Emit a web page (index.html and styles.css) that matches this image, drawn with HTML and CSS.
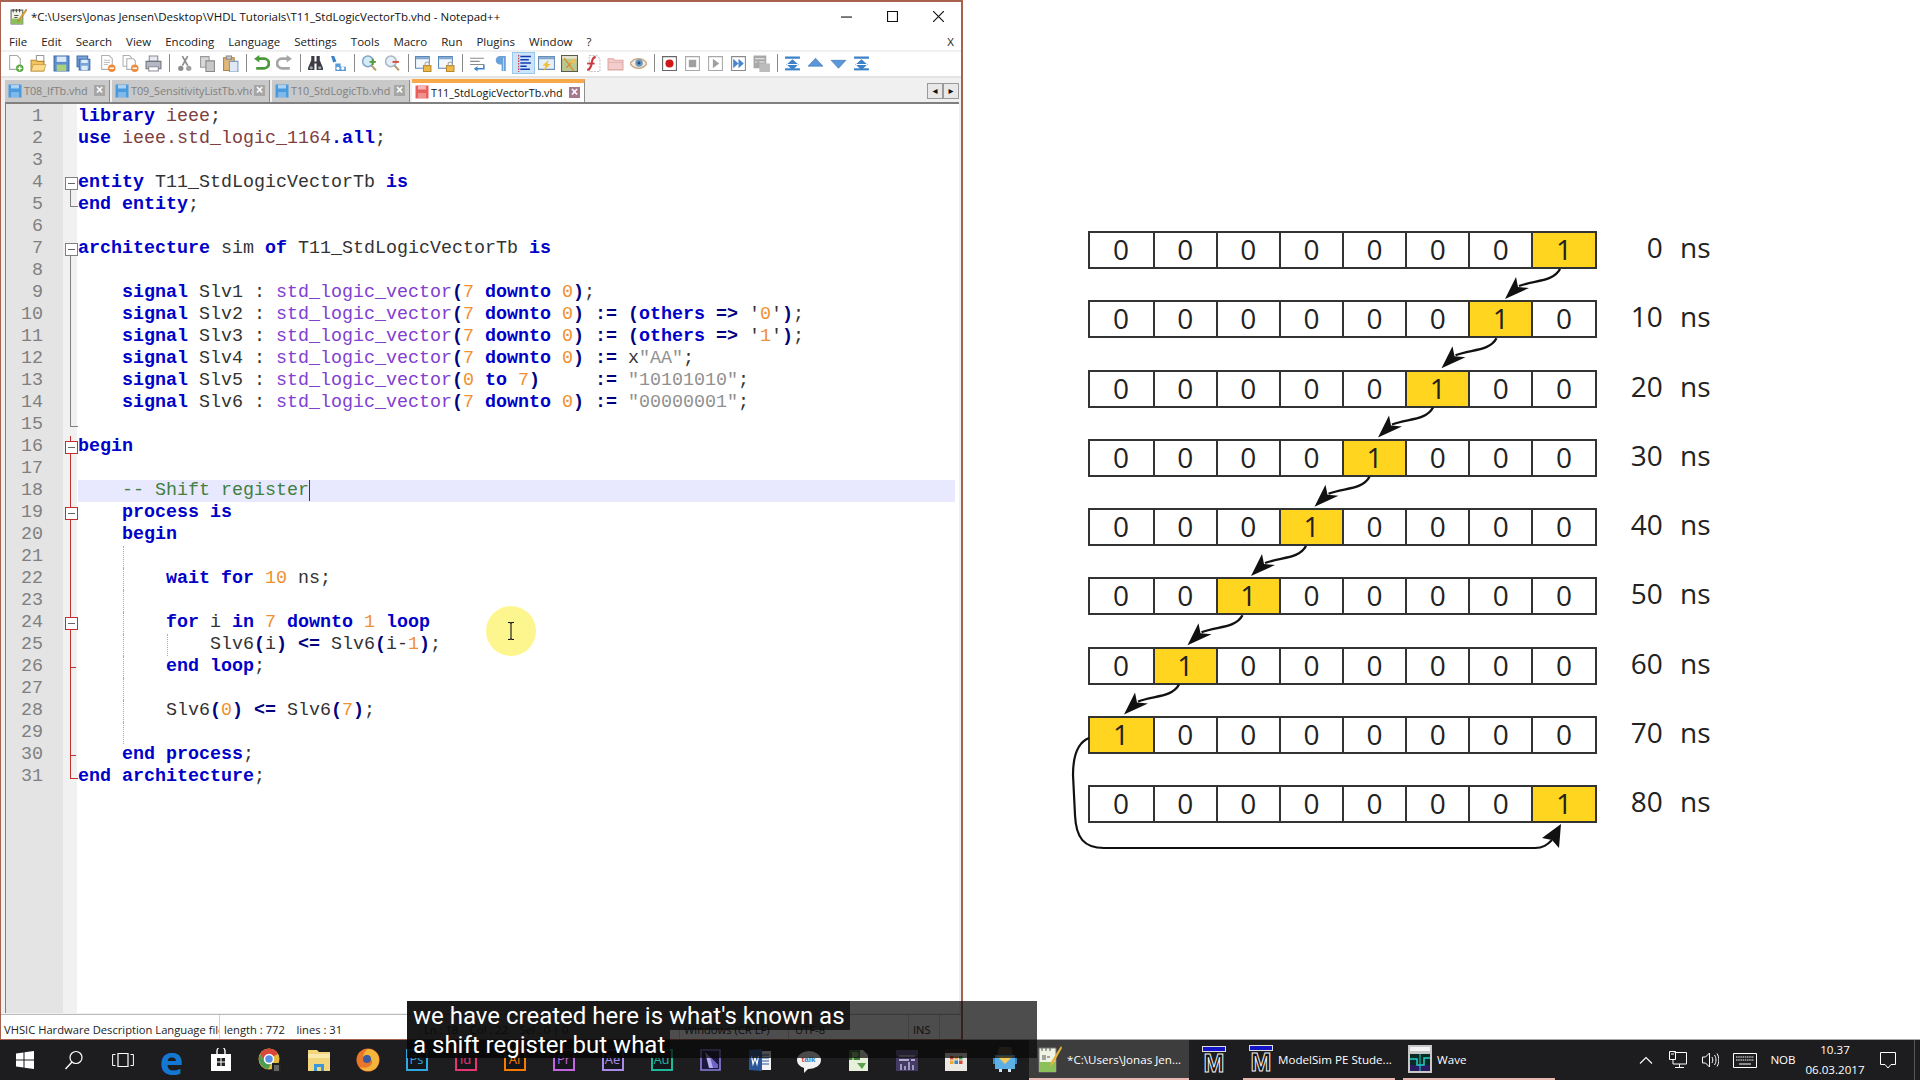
FILE: index.html

```html
<!DOCTYPE html>
<html lang="en">
<head>
  <meta charset="UTF-8" />
  <title>T11_StdLogicVectorTb.vhd - Notepad++</title>
  <link rel="stylesheet" href="styles.css">
</head>
<body>
  <!-- toolbar icon set -->
  <svg class="defs" xmlns="http://www.w3.org/2000/svg">
    <symbol id="i-new" viewBox="0 0 16 16"><path d="M2.5 .5h7l3 3v10h-10z" fill="#fff" stroke="#a8a8a8"/><circle cx="12" cy="12.5" r="3.5" fill="#5aa845"/><path d="M10 12.5h4M12 10.5v4" stroke="#fff" stroke-width="1.2"/></symbol>
    <symbol id="i-open" viewBox="0 0 16 16"><path d="M6 .5h7v8H6z" fill="#fff" stroke="#9a9a9a"/><path d="M1 5h5l1 1h6v9H1z" fill="#f2c35c" stroke="#b98a2e"/><path d="M1 15l2-6h12l-2 6z" fill="#fbdc8c" stroke="#b98a2e" stroke-width=".6"/></symbol>
    <symbol id="i-save" viewBox="0 0 16 16"><path d="M1 1h14v14H1z" fill="#5d8fd0" stroke="#3d6aa8"/><path d="M3.5 1.5h9v5h-9z" fill="#dbe8f6"/><path d="M3.5 9h9v6h-9z" fill="#a9d07e"/></symbol>
    <symbol id="i-saveall" viewBox="0 0 16 16"><path d="M1 1h10v10H1z" fill="#7ba4d8" stroke="#3d6aa8"/><path d="M3 4h10v10H3z" fill="#7ba4d8" stroke="#3d6aa8"/><path d="M5 4.5h6v3H5zM5 10h6v4H5z" fill="#dcebf8"/></symbol>
    <symbol id="i-close" viewBox="0 0 16 16"><path d="M2.5 .5h7l3 3v10h-10z" fill="#fff" stroke="#b0b0b0"/><path d="M4.5 5h6M4.5 7h6M4.5 9h4" stroke="#c0c0c0"/><circle cx="12" cy="12.5" r="3.5" fill="#ef8a3c"/><path d="M10 12.5h4" stroke="#fff" stroke-width="1.4"/></symbol>
    <symbol id="i-closeall" viewBox="0 0 16 16"><path d="M1 .5h6l2 2v8H1z" fill="#fff" stroke="#b0b0b0"/><path d="M4.5 3.500h6l2 2v8h-8z" fill="#fff" stroke="#b0b0b0"/><circle cx="12" cy="12.5" r="3.5" fill="#ef8a3c"/><path d="M10 12.5h4" stroke="#fff" stroke-width="1.4"/></symbol>
    <symbol id="i-print" viewBox="0 0 16 16"><path d="M4 1h8v5H4z" fill="#e8e8f0" stroke="#8a8a96"/><path d="M1 6h14v7H1z" fill="#b4b8c4" stroke="#70747e"/><path d="M3.500 11h9v4h-9z" fill="#fff" stroke="#8a8a96"/></symbol>
    <symbol id="i-cut" viewBox="0 0 16 16"><path d="M11 1L6 10M6 1l5 9" stroke="#8c8c8c" stroke-width="1.6"/><circle cx="4.500" cy="12.500" r="2.500" fill="#8c8c8c"/><circle cx="12" cy="12.500" r="2.500" fill="#a0a0a0"/></symbol>
    <symbol id="i-copy" viewBox="0 0 16 16"><path d="M1.500 1.500h8v10h-8z" fill="#d8d8d8" stroke="#9a9a9a"/><path d="M6.500 5.500h8v10h-8z" fill="#c8c8c8" stroke="#8a8a8a"/></symbol>
    <symbol id="i-paste" viewBox="0 0 16 16"><path d="M1.500 2.500h10v12h-10z" fill="#e2b878" stroke="#a98348"/><path d="M4 1h5v3H4z" fill="#c8c8c8" stroke="#888"/><path d="M7 6h8v10H7z" fill="#dfe9f6" stroke="#7c9cc4"/></symbol>
    <symbol id="i-undo" viewBox="0 0 16 16"><path d="M4 3.500h6.500a4.500 4.500 0 0 1 0 9H3" fill="none" stroke="#4d9a3a" stroke-width="2.600"/><path d="M6 0v7L1 3.500z" fill="#4d9a3a"/></symbol>
    <symbol id="i-redo" viewBox="0 0 16 16"><path d="M12 3.500H5.500a4.500 4.500 0 0 0 0 9H13" fill="none" stroke="#a6a6a6" stroke-width="2.600"/><path d="M10 0v7l5-3.500z" fill="#a6a6a6"/></symbol>
    <symbol id="i-find" viewBox="0 0 16 16"><path d="M4 1h3v5h2V1h3v4l3 7v2H9V8H7v6H1v-2l3-7z" fill="#3c3c46"/><circle cx="4" cy="12" r="1.500" fill="#9aa"/><circle cx="12" cy="12" r="1.500" fill="#9aa"/></symbol>
    <symbol id="i-replace" viewBox="0 0 16 16"><path d="M1 1h3l2 5-3 1z" fill="#3c82c8"/><path d="M5 8h5v3h5v4H5z" fill="#5b9ad8"/><circle cx="7.500" cy="12.500" r="1.500" fill="#fff"/><circle cx="12" cy="12.500" r="1.500" fill="#fff"/></symbol>
    <symbol id="i-zoomin" viewBox="0 0 16 16"><circle cx="6.500" cy="6" r="5" fill="#d6ebf8" stroke="#7fa6c8" stroke-width="1.400"/><path d="M10 10l4 4.500" stroke="#b89a70" stroke-width="2"/><path d="M8 6.500h6M11 3.500v6" stroke="#4d9a3a" stroke-width="1.800"/></symbol>
    <symbol id="i-zoomout" viewBox="0 0 16 16"><circle cx="6.500" cy="6" r="5" fill="#e6eef6" stroke="#a8b8c8" stroke-width="1.400"/><path d="M10 10l4 4.500" stroke="#b89a70" stroke-width="2"/><path d="M8 6.500h6" stroke="#d84a3c" stroke-width="1.800"/></symbol>
    <symbol id="i-sync" viewBox="0 0 16 16"><path d="M.5 1.500h13v11H.5z" fill="#f4f8fc" stroke="#5a88b8"/><path d="M1 2h12v2H1z" fill="#7ea6d0"/><path d="M8 10h7v5.500H8z" fill="#f0b848" stroke="#b88a2c"/><path d="M9.500 10V8.500a2 2 0 0 1 4 0V10" fill="none" stroke="#a8a8a8"/></symbol>
    <symbol id="i-wrap" viewBox="0 0 16 16"><path d="M1 3h13M1 6h9M1 9h13" stroke="#8a8a8a"/><path d="M14 9v4H7" fill="none" stroke="#3c82c8" stroke-width="1.400"/><path d="M8 10.500v5L4.500 13z" fill="#3c82c8"/></symbol>
    <symbol id="i-para" viewBox="0 0 16 16"><path d="M13 1H7.500a4 4 0 0 0 0 8H9v6h1.500V2.500H11V15h2z" fill="#6aa2da"/></symbol>
    <symbol id="i-indent" viewBox="0 0 16 16"><path d="M3.500 0v16" stroke="#c8202c" stroke-dasharray="1.500 1"/><path d="M5 1.500h10M5 4.500h8M5 7.500h10M5 10.500h6M5 13.500h9" stroke="#1438b4" stroke-width="1.400"/></symbol>
    <symbol id="i-lang" viewBox="0 0 16 16"><path d="M.5 1.500h15v12H.5z" fill="#e6f0fa" stroke="#6a8eb4"/><path d="M1 2h14v2H1z" fill="#7ea6d0"/><path d="M10 4.500L4 10h3l-2 5 7-6.500H9z" fill="#f2c040"/></symbol>
    <symbol id="i-map" viewBox="0 0 16 16"><path d="M.5.500h15v15H.5z" fill="#b8c890" stroke="#5c5c48"/><path d="M1 1h14v2.500H1z" fill="#e4e4d0"/><path d="M3 3l9 12M13 4L5 12" stroke="#d88c30" stroke-width="1.300"/><path d="M9 4h5v4H9z" fill="#e8c060"/></symbol>
    <symbol id="i-func" viewBox="0 0 16 16"><path d="M5 .500h7l3 3v12H5z" fill="#fff" stroke="#c4c4c4" stroke-dasharray="2 1"/><path d="M11 2C7 2 8 6 7 9s-1 5-4 5" fill="none" stroke="#c8383c" stroke-width="2"/><path d="M3 8h7" stroke="#c8383c" stroke-width="1.600"/></symbol>
    <symbol id="i-folder" viewBox="0 0 16 16"><path d="M1 3.500h5l1 1.500h8v9H1z" fill="#f3cdcb" stroke="#dca6a2"/><path d="M1 7h14" stroke="#e2b4b0"/></symbol>
    <symbol id="i-eye" viewBox="0 0 16 16"><path d="M0 8c4-6 12-6 16 0-4 6-12 6-16 0z" fill="#f4ece0" stroke="#c8aa84" stroke-width="1.400"/><circle cx="8.500" cy="7.500" r="3.500" fill="#6a96c4"/><circle cx="8.500" cy="7.500" r="1.400" fill="#2c4c70"/></symbol>
    <symbol id="i-rec" viewBox="0 0 16 16"><path d="M1.500 1.500h13v13h-13z" fill="#fff" stroke="#666"/><circle cx="8" cy="8" r="3.800" fill="#d01818"/></symbol>
    <symbol id="i-stop" viewBox="0 0 16 16"><path d="M1.500 1.500h13v13h-13z" fill="#fff" stroke="#a8a8a8"/><path d="M4.500 4.500h7v7h-7z" fill="#a0a0a0"/></symbol>
    <symbol id="i-play" viewBox="0 0 16 16"><path d="M1.500 1.500h13v13h-13z" fill="#fff" stroke="#a8a8a8"/><path d="M5.500 3.500l6 4.500-6 4.500z" fill="#a0a0a0"/></symbol>
    <symbol id="i-multi" viewBox="0 0 16 16"><path d="M1.500 1.500h13v13h-13z" fill="#fff" stroke="#8a8a8a"/><path d="M3 3.500l5 4.500-5 4.500zM8 3.500l5 4.500-5 4.500z" fill="#4a86d0"/></symbol>
    <symbol id="i-macro" viewBox="0 0 16 16"><path d="M.500 .500h12v12H.500z" fill="#a8a8a8"/><path d="M2 3h9v1H2zM2 6h2v1H2zM6 6h5v1H6z" fill="#eee"/><path d="M6 8h10v8H6z" fill="#bcbcbc"/></symbol>
    <symbol id="i-top" viewBox="0 0 16 16"><path d="M1 1.500h14v2H1zM8 4l6 5.500H2zM8 14l6-5.500H2z" fill="#3c82c8"/><path d="M1 12.500h14v2H1z" fill="#3c82c8"/></symbol>
    <symbol id="i-up" viewBox="0 0 16 16"><path d="M8 3l7 7.500H1z" fill="#5a96d8" stroke="#3c74b8" stroke-width=".6"/></symbol>
    <symbol id="i-down" viewBox="0 0 16 16"><path d="M8 12.500L1 5h14z" fill="#5a96d8" stroke="#3c74b8" stroke-width=".6"/></symbol>
    <symbol id="i-floppy" viewBox="0 0 14 14"><path d="M.500 .500h13v13H.500z" fill="currentColor"/><path d="M3 1h8v3.500H3z" fill="#fff" fill-opacity=".55"/><path d="M3 8h8v5.500H3z" fill="#fff" fill-opacity=".3"/></symbol>
  </svg>

  <div class="desktop">
    <section class="npp">
      <header class="titlebar">
        <svg class="app-icon" viewBox="0 0 16 16"><path d="M1 2h11v13H1z" fill="#eef3e4" stroke="#666"/><path d="M1 10h11v5H1z" fill="#8cc05a"/><path d="M3 1v3M6 1v3M9 1v3" stroke="#444"/><path d="M4 7h4M4 9h3" stroke="#555"/><path d="M15 1L8 11l-1 2 2-1L16 2z" fill="#e8b03c" stroke="#9c6c1c" stroke-width=".5"/></svg>
        <span class="title-text">*C:\Users\Jonas Jensen\Desktop\VHDL Tutorials\T11_StdLogicVectorTb.vhd - Notepad++</span>
        <div class="win-btns">
          <span class="win-btn"><svg viewBox="0 0 10 10"><path d="M0 5.500h10" stroke="#111"/></svg></span>
          <span class="win-btn"><svg viewBox="0 0 10 10"><path d="M.5.500h9v9h-9z" fill="none" stroke="#111"/></svg></span>
          <span class="win-btn"><svg viewBox="0 0 10 10"><path d="M0 0l10 10M10 0L0 10" stroke="#111" stroke-width="1.050"/></svg></span>
        </div>
      </header>

      <nav class="menubar">
        <span>File</span><span>Edit</span><span>Search</span><span>View</span><span>Encoding</span><span>Language</span><span>Settings</span><span>Tools</span><span>Macro</span><span>Run</span><span>Plugins</span><span>Window</span><span>?</span>
        <span class="menu-x">X</span>
      </nav>

      <div class="toolbar">
        <span class="tool"><svg><use href="#i-new"/></svg></span>
        <span class="tool"><svg><use href="#i-open"/></svg></span>
        <span class="tool"><svg><use href="#i-save"/></svg></span>
        <span class="tool"><svg><use href="#i-saveall"/></svg></span>
        <span class="tool"><svg><use href="#i-close"/></svg></span>
        <span class="tool"><svg><use href="#i-closeall"/></svg></span>
        <span class="tool"><svg><use href="#i-print"/></svg></span>
        <i class="sep"></i>
        <span class="tool"><svg><use href="#i-cut"/></svg></span>
        <span class="tool"><svg><use href="#i-copy"/></svg></span>
        <span class="tool"><svg><use href="#i-paste"/></svg></span>
        <i class="sep"></i>
        <span class="tool"><svg><use href="#i-undo"/></svg></span>
        <span class="tool"><svg><use href="#i-redo"/></svg></span>
        <i class="sep"></i>
        <span class="tool"><svg><use href="#i-find"/></svg></span>
        <span class="tool"><svg><use href="#i-replace"/></svg></span>
        <i class="sep"></i>
        <span class="tool"><svg><use href="#i-zoomin"/></svg></span>
        <span class="tool"><svg><use href="#i-zoomout"/></svg></span>
        <i class="sep"></i>
        <span class="tool"><svg><use href="#i-sync"/></svg></span>
        <span class="tool"><svg><use href="#i-sync"/></svg></span>
        <i class="sep"></i>
        <span class="tool"><svg><use href="#i-wrap"/></svg></span>
        <span class="tool"><svg><use href="#i-para"/></svg></span>
        <span class="tool active"><svg><use href="#i-indent"/></svg></span>
        <span class="tool"><svg><use href="#i-lang"/></svg></span>
        <span class="tool"><svg><use href="#i-map"/></svg></span>
        <span class="tool"><svg><use href="#i-func"/></svg></span>
        <span class="tool"><svg><use href="#i-folder"/></svg></span>
        <span class="tool"><svg><use href="#i-eye"/></svg></span>
        <i class="sep"></i>
        <span class="tool"><svg><use href="#i-rec"/></svg></span>
        <span class="tool"><svg><use href="#i-stop"/></svg></span>
        <span class="tool"><svg><use href="#i-play"/></svg></span>
        <span class="tool"><svg><use href="#i-multi"/></svg></span>
        <span class="tool"><svg><use href="#i-macro"/></svg></span>
        <i class="sep"></i>
        <span class="tool"><svg><use href="#i-top"/></svg></span>
        <span class="tool"><svg><use href="#i-up"/></svg></span>
        <span class="tool"><svg><use href="#i-down"/></svg></span>
        <span class="tool"><svg><use href="#i-top"/></svg></span>
      </div>

      <div class="tabbar">
        <div class="tab tab-a"><svg class="floppy"><use href="#i-floppy"/></svg><span class="tab-name">T08_IfTb.vhd</span><b class="tab-x">&times;</b></div>
        <div class="tab tab-b"><svg class="floppy"><use href="#i-floppy"/></svg><span class="tab-name">T09_SensitivityListTb.vhd</span><b class="tab-x">&times;</b></div>
        <div class="tab tab-c"><svg class="floppy"><use href="#i-floppy"/></svg><span class="tab-name">T10_StdLogicTb.vhd</span><b class="tab-x">&times;</b></div>
        <div class="tab tab-d current"><svg class="floppy"><use href="#i-floppy"/></svg><span class="tab-name">T11_StdLogicVectorTb.vhd</span><b class="tab-x">&times;</b></div>
        <div class="tab-scroll"><span>&#9666;</span><span>&#9656;</span></div>
      </div>

      <div class="editor">
        <div class="row"><span class="num">1</span><span class="fold"></span><code><b class="k">library</b> <span class="l">ieee</span>;</code></div>
        <div class="row"><span class="num">2</span><span class="fold"></span><code><b class="k">use</b> <span class="l">ieee.std_logic_1164</span><b class="k">.all</b>;</code></div>
        <div class="row"><span class="num">3</span><span class="fold"></span><code></code></div>
        <div class="row"><span class="num">4</span><span class="fold box"></span><code><b class="k">entity</b> T11_StdLogicVectorTb <b class="k">is</b></code></div>
        <div class="row"><span class="num">5</span><span class="fold end"></span><code><b class="k">end entity</b>;</code></div>
        <div class="row"><span class="num">6</span><span class="fold"></span><code></code></div>
        <div class="row"><span class="num">7</span><span class="fold box"></span><code><b class="k">architecture</b> sim <b class="k">of</b> T11_StdLogicVectorTb <b class="k">is</b></code></div>
        <div class="row"><span class="num">8</span><span class="fold line"></span><code></code></div>
        <div class="row"><span class="num">9</span><span class="fold line"></span><code>    <b class="k">signal</b> Slv1 : <span class="t">std_logic_vector</span><b class="o">(</b><span class="n">7</span> <b class="k">downto</b> <span class="n">0</span><b class="o">)</b>;</code></div>
        <div class="row"><span class="num">10</span><span class="fold line"></span><code>    <b class="k">signal</b> Slv2 : <span class="t">std_logic_vector</span><b class="o">(</b><span class="n">7</span> <b class="k">downto</b> <span class="n">0</span><b class="o">)</b> <b class="o">:=</b> <b class="o">(</b><b class="k">others</b> <b class="o">=&gt;</b> '<span class="n">0</span>'<b class="o">)</b>;</code></div>
        <div class="row"><span class="num">11</span><span class="fold line"></span><code>    <b class="k">signal</b> Slv3 : <span class="t">std_logic_vector</span><b class="o">(</b><span class="n">7</span> <b class="k">downto</b> <span class="n">0</span><b class="o">)</b> <b class="o">:=</b> <b class="o">(</b><b class="k">others</b> <b class="o">=&gt;</b> '<span class="n">1</span>'<b class="o">)</b>;</code></div>
        <div class="row"><span class="num">12</span><span class="fold line"></span><code>    <b class="k">signal</b> Slv4 : <span class="t">std_logic_vector</span><b class="o">(</b><span class="n">7</span> <b class="k">downto</b> <span class="n">0</span><b class="o">)</b> <b class="o">:=</b> x<span class="s">"AA"</span>;</code></div>
        <div class="row"><span class="num">13</span><span class="fold line"></span><code>    <b class="k">signal</b> Slv5 : <span class="t">std_logic_vector</span><b class="o">(</b><span class="n">0</span> <b class="k">to</b> <span class="n">7</span><b class="o">)</b>     <b class="o">:=</b> <span class="s">"10101010"</span>;</code></div>
        <div class="row"><span class="num">14</span><span class="fold line"></span><code>    <b class="k">signal</b> Slv6 : <span class="t">std_logic_vector</span><b class="o">(</b><span class="n">7</span> <b class="k">downto</b> <span class="n">0</span><b class="o">)</b> <b class="o">:=</b> <span class="s">"00000001"</span>;</code></div>
        <div class="row"><span class="num">15</span><span class="fold end"></span><code></code></div>
        <div class="row"><span class="num">16</span><span class="fold box red"></span><code><b class="k">begin</b></code></div>
        <div class="row"><span class="num">17</span><span class="fold line red"></span><code></code></div>
        <div class="row"><span class="num">18</span><span class="fold line red"></span><code class="current-line">    <span class="c caret">-- Shift register</span></code></div>
        <div class="row"><span class="num">19</span><span class="fold box red"></span><code>    <b class="k">process is</b></code></div>
        <div class="row"><span class="num">20</span><span class="fold line red"></span><code>    <b class="k">begin</b></code></div>
        <div class="row"><span class="num">21</span><span class="fold line red"></span><code><i class="guide g1"></i></code></div>
        <div class="row"><span class="num">22</span><span class="fold line red"></span><code><i class="guide g1"></i>        <b class="k">wait for</b> <span class="n">10</span> ns;</code></div>
        <div class="row"><span class="num">23</span><span class="fold line red"></span><code><i class="guide g1"></i></code></div>
        <div class="row"><span class="num">24</span><span class="fold box red"></span><code><i class="guide g1"></i>        <b class="k">for</b> i <b class="k">in</b> <span class="n">7</span> <b class="k">downto</b> <span class="n">1</span> <b class="k">loop</b></code></div>
        <div class="row"><span class="num">25</span><span class="fold line red"></span><code><i class="guide g1"></i><i class="guide g2"></i>            Slv6<b class="o">(</b>i<b class="o">)</b> <b class="o">&lt;=</b> Slv6<b class="o">(</b>i-<span class="n">1</span><b class="o">)</b>;</code></div>
        <div class="row"><span class="num">26</span><span class="fold tick red"></span><code><i class="guide g1"></i>        <b class="k">end loop</b>;</code></div>
        <div class="row"><span class="num">27</span><span class="fold line red"></span><code><i class="guide g1"></i></code></div>
        <div class="row"><span class="num">28</span><span class="fold line red"></span><code><i class="guide g1"></i>        Slv6<b class="o">(</b><span class="n">0</span><b class="o">)</b> <b class="o">&lt;=</b> Slv6<b class="o">(</b><span class="n">7</span><b class="o">)</b>;</code></div>
        <div class="row"><span class="num">29</span><span class="fold line red"></span><code><i class="guide g1"></i></code></div>
        <div class="row"><span class="num">30</span><span class="fold tick red"></span><code>    <b class="k">end process</b>;</code></div>
        <div class="row"><span class="num">31</span><span class="fold end red"></span><code><b class="k">end architecture</b>;</code></div>
      </div>

      <footer class="statusbar">
        <span class="panel p1">VHSIC Hardware Description Language file</span>
        <span class="panel p2">length : 772&nbsp;&nbsp;&nbsp; lines : 31</span>
        <span class="panel p3">Ln : 18 &nbsp;&nbsp; Col : 22 &nbsp;&nbsp; Sel : 0 | 0</span>
        <span class="panel p4">Windows (CR LF)</span>
        <span class="panel p5">UTF-8</span>
        <span class="panel p6">INS</span>
      </footer>
    </section>

    <section class="stage">
      <div class="reg"><div class="board"><span>0</span><span>0</span><span>0</span><span>0</span><span>0</span><span>0</span><span>0</span><span class="on">1</span></div><span class="time">0 ns</span></div>
      <div class="reg"><div class="board"><span>0</span><span>0</span><span>0</span><span>0</span><span>0</span><span>0</span><span class="on">1</span><span>0</span></div><span class="time">10 ns</span></div>
      <div class="reg"><div class="board"><span>0</span><span>0</span><span>0</span><span>0</span><span>0</span><span class="on">1</span><span>0</span><span>0</span></div><span class="time">20 ns</span></div>
      <div class="reg"><div class="board"><span>0</span><span>0</span><span>0</span><span>0</span><span class="on">1</span><span>0</span><span>0</span><span>0</span></div><span class="time">30 ns</span></div>
      <div class="reg"><div class="board"><span>0</span><span>0</span><span>0</span><span class="on">1</span><span>0</span><span>0</span><span>0</span><span>0</span></div><span class="time">40 ns</span></div>
      <div class="reg"><div class="board"><span>0</span><span>0</span><span class="on">1</span><span>0</span><span>0</span><span>0</span><span>0</span><span>0</span></div><span class="time">50 ns</span></div>
      <div class="reg"><div class="board"><span>0</span><span class="on">1</span><span>0</span><span>0</span><span>0</span><span>0</span><span>0</span><span>0</span></div><span class="time">60 ns</span></div>
      <div class="reg"><div class="board"><span class="on">1</span><span>0</span><span>0</span><span>0</span><span>0</span><span>0</span><span>0</span><span>0</span></div><span class="time">70 ns</span></div>
      <div class="reg"><div class="board"><span>0</span><span>0</span><span>0</span><span>0</span><span>0</span><span>0</span><span>0</span><span class="on">1</span></div><span class="time">80 ns</span></div>

      <!-- arrows between the register rows -->
      <svg class="arrows" viewBox="963 0 957 1039">
        <g id="hop">
          <path d="M1560 269C1553 282 1535 280 1519 286" fill="none" stroke="#111" stroke-width="2.4"/>
          <path d="M1505 299L1516 277L1518 287L1529 288Z" fill="#111"/>
        </g>
        <use href="#hop" transform="translate(-63.5 69.25)"/>
        <use href="#hop" transform="translate(-127 138.5)"/>
        <use href="#hop" transform="translate(-190.5 207.75)"/>
        <use href="#hop" transform="translate(-254 277)"/>
        <use href="#hop" transform="translate(-317.5 346.25)"/>
        <use href="#hop" transform="translate(-381 415.5)"/>
        <path d="M1089 738C1079 742 1073 752 1073 775L1075 815C1076 838 1084 848 1104 848L1535 848C1543 848 1547 845 1552 840" fill="none" stroke="#111" stroke-width="2.2"/>
        <path d="M1561 824L1559 848L1552 840L1542 838Z" fill="#111"/>
      </svg>
    </section>
  </div>

  <footer class="taskbar">
    <div class="slot"><svg width="18" height="18" viewBox="0 0 18 18"><path d="M0 2.500l7.500-1v7H0zM8.500 1.300L18 0v8.500H8.500zM0 9.500h7.500v7L0 15.500zM8.500 9.500H18V18l-9.500-1.300z" fill="#fff"/></svg></div>
    <div class="slot"><svg width="20" height="20" viewBox="0 0 20 20"><circle cx="12" cy="7.500" r="6" fill="none" stroke="#fff" stroke-width="1.200"/><path d="M8 12l-6.500 7" stroke="#fff" stroke-width="1.400"/></svg></div>
    <div class="slot"><svg width="22" height="16" viewBox="0 0 22 16"><path d="M6 1.500h10v13H6z" fill="none" stroke="#fff" stroke-width="1.200"/><path d="M3.500 2.500H.6v11h2.900M18.500 2.500h2.900v11h-2.900" fill="none" stroke="#fff"/></svg></div>
    <div class="slot"><span class="edge-e">e</span></div>
    <div class="slot"><svg width="22" height="24" viewBox="0 0 22 24"><path d="M1 6h20v17H1z" fill="#fff"/><path d="M7 6V3a4 4 0 0 1 8 0v3" fill="none" stroke="#fff" stroke-width="1.400"/><path d="M7 10h3.500v3.500H7zM11.500 10H15v3.500h-3.500zM7 14.500h3.500V18H7zM11.500 14.500H15V18h-3.500z" fill="#222"/></svg></div>
    <div class="slot"><svg width="24" height="24" viewBox="0 0 24 24"><circle cx="11" cy="11" r="10.500" fill="#e4b93c"/><path d="M11 .5A10.500 10.500 0 0 0 2 6l5 8h4l-1-3 10-5A10.500 10.500 0 0 0 11 .5z" fill="#d9483b"/><path d="M2 6a10.500 10.500 0 0 0 8 15l4-7H7z" fill="#4a9d52"/><circle cx="11" cy="11" r="4.500" fill="#5b8fe6" stroke="#fff" stroke-width="1.500"/><path d="M14 15h9v9h-9z" fill="#222"/><path d="M16 17h5v6h-5z" fill="#666"/></svg></div>
    <div class="slot"><svg width="22" height="22" viewBox="0 0 22 22"><path d="M0 1h9l2 2h11v19H0z" fill="#f3d57c"/><path d="M0 5h22v4H0z" fill="#fbe9ab"/><path d="M6 15h10v7H6z" fill="#3a98d8"/><path d="M9 18h4v4H9z" fill="#f3d57c"/></svg></div>
    <div class="slot"><svg width="24" height="24" viewBox="0 0 24 24"><circle cx="12" cy="12" r="11.500" fill="#e8772c"/><path d="M12 1A11 11 0 0 1 23 12c0 7-5 11-11 11-3 0-6-1-8-4 5 2 11 0 12-4 1-3-2-5-4-5l1-2c-2-1-5 0-6 1 0-3 3-7 5-8z" fill="#f4b63a"/><circle cx="11" cy="11" r="4" fill="#3b5aa0"/></svg></div>
    <div class="slot"><span class="tile ps">Ps</span></div>
    <div class="slot"><span class="tile id">Id</span></div>
    <div class="slot"><span class="tile ai">Ai</span></div>
    <div class="slot"><span class="tile pr">Pr</span></div>
    <div class="slot"><span class="tile ae">Ae</span></div>
    <div class="slot"><span class="tile au">Au</span></div>
    <div class="slot"><svg width="21" height="22" viewBox="0 0 21 22"><path d="M1 1h19v20H1z" fill="#1b1740" stroke="#8a80dc" stroke-width="1.600"/><path d="M5 3l13 13v3H9z" fill="#b6b0ec"/><path d="M10 8l8 8v3h-5z" fill="#6c62c8"/></svg></div>
    <div class="slot"><svg width="22" height="22" viewBox="0 0 22 22"><path d="M9 2h13v19H9z" fill="#f4f4f4"/><path d="M12 6h8M12 9h8M12 12h8M12 15h8" stroke="#2b579a"/><path d="M0 1l13-1v22L0 21z" fill="#2b579a"/><path d="M2.500 7l1.500 8 2-6 2 6 1.500-8" fill="none" stroke="#fff" stroke-width="1.200"/></svg></div>
    <div class="slot"><span class="talk"><i>t</i><i>a</i><i>l</i><i>k</i></span></div>
    <div class="slot"><svg width="22" height="23" viewBox="0 0 22 23"><path d="M2 1h14l5 5v16H2z" fill="#e6f0da"/><path d="M2 1h11v10H2z" fill="#3e7a3a"/><path d="M5 3h4a2.500 2.500 0 0 1 0 5H7v3H5z" fill="#9cc37a"/><path d="M10 14l5 6 4-6z" fill="#5aa04a"/></svg></div>
    <div class="slot"><svg width="22" height="23" viewBox="0 0 22 23"><path d="M0 1h22v21H0z" fill="#443a66"/><path d="M0 1h22v6H0z" fill="#6a5c92"/><path d="M3 7h16M3 11h10M15 11h4" stroke="#d6d0e8" stroke-width="1.400"/><path d="M5 21v-6M9 21v-4M13 21v-8M17 21v-5" stroke="#c8c0e0" stroke-width="1.400"/></svg></div>
    <div class="slot"><svg width="22" height="22" viewBox="0 0 22 22"><path d="M0 0h22v22H0z" fill="#ece9e2"/><path d="M0 0h22v4H0z" fill="#3b2a26"/><path d="M5 7h3.500v3.500H5z" fill="#d84a3c"/><path d="M9.500 7H13v3.500H9.500z" fill="#f0a830"/><path d="M14 7h3.500v3.500H14z" fill="#4aa04a"/><path d="M5 11.500h3.500V15H5z" fill="#f0a830"/><path d="M9.500 11.500H13V15H9.500z" fill="#3c82c8"/><path d="M14 11.500h3.500V15H14z" fill="#d84a3c"/></svg></div>
    <div class="slot"><svg width="24" height="26" viewBox="0 0 24 26"><path d="M6 0h12l2 8H4z" fill="#5a4838"/><path d="M2 8h20v14H2z" fill="#5cb0e4"/><path d="M4 9h16l-8 8z" fill="#f4ca60"/><path d="M0 11h2v6H0zM22 11h2v6h-2z" fill="#3c88c0"/><path d="M6 22h3v3H6zM15 22h3v3h-3z" fill="#cfe4f4"/></svg></div>

    <div class="task on-screen current-task">
      <svg width="24" height="28" viewBox="0 0 24 28"><path d="M1 3h17v24H1z" fill="#eef3e4" stroke="#777"/><path d="M1 17h17v10H1z" fill="#8cc05a"/><path d="M4 2v4M8 2v4M12 2v4" stroke="#555"/><path d="M5 10v5M7 10v5M9 12h3" stroke="#555"/><path d="M23 1L13 17l-1 4 3-2L24 3z" fill="#e8b03c"/></svg>
      <span>*C:\Users\Jonas Jen...</span>
    </div>
    <div class="m-slot"><span class="msim"><i></i><b>M</b></span></div>
    <div class="task on-screen ms">
      <span class="msim"><i></i><b>M</b></span>
      <span>ModelSim PE Stude...</span>
    </div>
    <div class="task on-screen wave">
      <svg width="24" height="28" viewBox="0 0 24 28"><path d="M0 0h24v28H0z" fill="#c8c8c8"/><path d="M2 2h20v4H2z" fill="#f4f4f4"/><path d="M2 9h20v17H2z" fill="#0a2a24"/><path d="M2 20h20v6H2z" fill="#2a1a60"/><path d="M2 14h7v6h7v-7h6" fill="none" stroke="#1fd0c8" stroke-width="1.500"/><path d="M12 9v17" stroke="#1fd0c8"/></svg>
      <span>Wave</span>
    </div>

    <div class="tray">
      <span class="ti t1"><svg width="14" height="8" viewBox="0 0 14 8"><path d="M1 7.500L7 1.500l6 6" fill="none" stroke="#fff" stroke-width="1.100"/></svg></span>
      <span class="ti t2"><svg width="18" height="18" viewBox="0 0 18 18"><path d="M5.500 1.500H17.500V13H4V9" fill="none" stroke="#fff"/><path d="M.5 .5h6v8h-6z" fill="none" stroke="#fff"/><path d="M2 3h3" stroke="#fff"/><path d="M10.500 13v3M6 16.500h9" stroke="#fff"/></svg></span>
      <span class="ti t3"><svg width="17" height="16" viewBox="0 0 17 16"><path d="M.5 5h3L7.500 1v14L3.500 11h-3z" fill="none" stroke="#fff"/><path d="M10 5c1 2 1 4 0 6M12.500 3c2 3 2 7 0 10M15 1.500c2.500 4 2.500 9 0 13" fill="none" stroke="#fff"/></svg></span>
      <span class="ti t4"><svg width="24" height="15" viewBox="0 0 24 15"><path d="M.5.500h23v14H.5z" fill="none" stroke="#fff"/><path d="M3 4h18M3 7h18" stroke="#fff" stroke-dasharray="1.500 .7"/><path d="M6 11h12" stroke="#fff"/></svg></span>
      <span class="ti t5">NOB</span>
      <span class="ti t6">10.37<br>06.03.2017</span>
      <span class="ti t7"><svg width="16" height="17" viewBox="0 0 16 17"><path d="M.5 .5h15v12H11L8 16 5 12.500H.5z" fill="none" stroke="#fff"/></svg></span>
      <span class="ti t8"></span>
    </div>
  </footer>

  <div class="caption">
    <p><span>we have created here is what's known as</span></p>
    <p><span>a shift register but what</span></p>
  </div>

  <div class="pointer">
    <svg width="8" height="18" viewBox="0 0 8 18"><path d="M1 .5h2l1 1 1-1h2M4 1.500v15M1 17.500h2l1-1 1 1h2" fill="none" stroke="#111" stroke-width="1.100"/></svg>
  </div>
</body>
</html>
```

FILE: styles.css

```css
* {
  box-sizing: border-box;
}

html, body {
  margin: 0;
  width: 1920px;
  height: 1080px;
  overflow: hidden;
}

body {
  position: relative;
  font-family: "Open Sans", sans-serif;
  background: #fff;
  color: #222;
}

.defs {
  position: absolute;
  width: 0;
  height: 0;
}

.desktop {
  display: flex;
  height: 1040px;
}

/* Notepad++ window */
.npp {
  display: flex;
  flex-direction: column;
  width: 963px;
  height: 1040px;
  background: #f0f0f0;
  border: 1px solid #a8604f;
  border-width: 2px 2px 1px 1px;
}

.titlebar {
  display: flex;
  align-items: center;
  height: 30px;
  padding: 0 0 1px 9px;
  background: #fff;
}

.app-icon {
  width: 17px;
  height: 17px;
  margin-right: 4px;
}

.title-text {
  font-size: 11.5px;
  color: #111;
  white-space: nowrap;
}

.win-btns {
  display: flex;
  margin-left: auto;
}

.win-btn {
  display: flex;
  align-items: center;
  justify-content: center;
  width: 46px;
  height: 29px;
}

.win-btn svg {
  width: 11px;
  height: 11px;
}

.menubar {
  display: flex;
  align-items: center;
  height: 18px;
  padding-left: 1px;
  background: #fff;
  font-size: 11.5px;
  color: #222;
}

.menubar span {
  padding: 0 7px;
}

.menubar .menu-x {
  margin-left: auto;
  padding: 0 7px 0 0;
}

.toolbar {
  display: flex;
  align-items: flex-start;
  height: 28px;
  padding-left: 3px;
  background: #fff;
  border-top: 2px solid #f0f0f0;
  border-bottom: 2px solid #e4e4e4;
}

.tool {
  display: flex;
  align-items: center;
  justify-content: center;
  width: 23px;
  height: 22px;
}

.tool svg {
  width: 17px;
  height: 17px;
}

.tool.active {
  background: #cce4f7;
  border: 1px solid #98c8ee;
}

.sep {
  width: 8px;
  height: 18px;
  margin-top: 2px;
  background: linear-gradient(#8a8a8a, #8a8a8a) center / 1px 100% no-repeat;
}

.tabbar {
  display: flex;
  align-items: flex-end;
  gap: 2px;
  height: 24px;
  padding-left: 4px;
  background: #f0f0f0;
}

.tab {
  display: flex;
  align-items: center;
  gap: 2px;
  height: 22px;
  padding: 0 4px 1px 3px;
  background: #c9c9c9;
  border-right: 1px solid #8e8e8e;
  font-size: 10.8px;
  color: #808080;
}

.tab-a { width: 105px; }
.tab-b { width: 158px; }
.tab-c { width: 138px; }
.tab-d { width: 173px; }

.tab.current {
  height: 23px;
  background: #fff;
  border-top: 4px solid #f7a94a;
  color: #111;
}

.floppy {
  flex: none;
  width: 14px;
  height: 14px;
  color: #4a9ae0;
}

.current .floppy {
  color: #e8605c;
}

.tab-name {
  flex: 1;
  white-space: nowrap;
  overflow: hidden;
}

.tab-x {
  flex: none;
  width: 11px;
  height: 11px;
  background: #a6a6a6;
  color: #fff;
  font: bold 12px/10px "Liberation Sans", sans-serif;
  text-align: center;
}

.current .tab-x {
  background: #a5788f;
}

.tab-scroll {
  display: flex;
  margin: 0 2px 3px auto;
}

.tab-scroll span {
  width: 16px;
  height: 16px;
  border: 1px solid #9a9a9a;
  background: #e8e8e8;
  font: 10px/14px "DejaVu Sans", sans-serif;
  text-align: center;
  color: #111;
}

/* code area */
.editor {
  flex: 1;
  margin: 0 2px 1px 4px;
  padding-top: 2px;
  border-top: 2px solid #808080;
  border-left: 1px solid #808080;
  background: linear-gradient(90deg, #e4e4e4 0 57px, #f1f1f1 57px 71px, #fff 71px);
  font-family: "Liberation Mono", monospace;
  font-size: 18.33px;
}

.row {
  display: flex;
  height: 22px;
  line-height: 22px;
}

.num {
  flex: none;
  width: 57px;
  padding-right: 20px;
  text-align: right;
  color: #808080;
}

.fold {
  --fold: #808080;
  flex: none;
  position: relative;
  width: 14px;
  margin-right: 1px;
}

.fold.red {
  --fold: #c0302c;
}

.fold.line::before,
.fold.tick::before,
.fold.box::before {
  content: "";
  position: absolute;
  left: 7px;
  top: 0;
  bottom: 0;
  width: 1px;
  background: var(--fold);
}

.fold.box:not(.red)::before {
  top: 11px;
}

.fold.tick::after {
  content: "";
  position: absolute;
  left: 7px;
  top: 11px;
  width: 6px;
  height: 1px;
  background: var(--fold);
}

.fold.end::before {
  content: "";
  position: absolute;
  left: 7px;
  top: 0;
  width: 7px;
  height: 12px;
  border-left: 1px solid var(--fold);
  border-bottom: 1px solid var(--fold);
}

.fold.box::after {
  content: "";
  position: absolute;
  left: 2px;
  top: 5px;
  width: 11px;
  height: 11px;
  border: 1px solid var(--fold);
  background: linear-gradient(#666, #666) center / 7px 1px no-repeat, #fff;
}

code {
  flex: 1;
  position: relative;
  font: inherit;
  white-space: pre;
  color: #333;
}

.current-line {
  background: #e8e8ff;
  margin-right: 4px;
}

.k { color: #0000c8; }
.o { color: #000080; }
.l { color: #804040; }
.t { color: #8040d0; }
.n { color: #f09030; }
.s { color: #909090; }
.c { color: #408040; }

.caret {
  border-right: 1px solid #8000a0;
}

.guide {
  position: absolute;
  top: 0;
  bottom: 0;
  width: 1px;
  border-left: 1px dotted #aaa;
}

.g1 { left: 45px; }
.g2 { left: 89px; }

.statusbar {
  display: flex;
  height: 25px;
  background: #fff;
  border-top: 1px solid #bbb;
  font-size: 11.2px;
  line-height: 29px;
  color: #222;
}

.panel {
  flex: none;
  padding-left: 4px;
  border-right: 1px solid #d0d0d0;
  white-space: nowrap;
  overflow: hidden;
}

.p1 { width: 219px; padding-left: 3px; }
.p2 { width: 200px; }
.p3 { width: 260px; }
.p4 { width: 109px; }
.p5 { width: 120px; padding-left: 6px; }
.p6 { width: 31px; }

/* shift register diagram */
.stage {
  position: relative;
  display: flex;
  flex: 1;
  flex-direction: column;
  gap: 31.25px;
  padding: 231px 0 0 124.5px;
  border-bottom: 1px solid #aaa;
}

.reg {
  display: flex;
  height: 38px;
}

.board {
  display: grid;
  grid-template-columns: repeat(8, 1fr);
  width: 509px;
  border: 2px solid #333;
}

.board span {
  border-left: 2px solid #333;
  font-size: 28px;
  line-height: 33px;
  text-align: center;
  color: #222;
}

.board span:first-child {
  border-left: 0;
}

.board .on {
  background: #ffd520;
}

.time {
  width: 114px;
  font-size: 28px;
  line-height: 33px;
  text-align: right;
  word-spacing: 10px;
  color: #222;
}

.arrows {
  position: absolute;
  left: 0;
  top: 0;
  width: 957px;
  height: 1039px;
  pointer-events: none;
}

/* windows taskbar */
.taskbar {
  display: flex;
  align-items: center;
  height: 40px;
  background: #1d1d1f;
  color: #fff;
  font-size: 11.6px;
}

.slot {
  display: flex;
  flex: none;
  align-items: center;
  justify-content: center;
  width: 49px;
  height: 40px;
}

.m-slot {
  display: flex;
  flex: none;
  align-items: center;
  justify-content: center;
  width: 50px;
  height: 40px;
  margin-right: 4px;
}

.edge-e {
  font: bold 40px/36px "Open Sans", sans-serif;
  color: #1478d2;
}

.tile {
  display: block;
  width: 22px;
  height: 22px;
  border: 2px solid;
  background: #15151c;
  font: 13px/17px "Open Sans", sans-serif;
  text-align: center;
}

.ps { color: #31a8e0; }
.id { color: #e8356f; }
.ai { color: #f57c00; }
.pr { color: #c067e0; }
.ae { color: #a98be6; }
.au { color: #1fb89a; }

.talk {
  position: relative;
  display: flex;
  justify-content: center;
  width: 24px;
  height: 18px;
  border-radius: 50%;
  background: #f2f2f2;
  font: bold 8px/18px "Liberation Sans", sans-serif;
}

.talk::after {
  content: "";
  position: absolute;
  left: 7px;
  bottom: -4px;
  border-top: 6px solid #f2f2f2;
  border-right: 6px solid transparent;
}

.talk i { font-style: normal; color: #d84a3c; }
.talk i + i { color: #3c82c8; }

.task {
  display: flex;
  flex: none;
  align-items: center;
  gap: 5px;
  height: 40px;
  border-bottom: 2px solid #e8b8b0;
  white-space: nowrap;
}

.current-task {
  width: 160px;
  padding-left: 9px;
  background: #3d3d3d;
}

.ms {
  width: 152px;
  padding-left: 6px;
  margin-right: 8px;
}

.wave {
  width: 152px;
  padding-left: 5px;
}

.msim {
  display: flex;
  flex-direction: column;
  align-items: center;
  width: 24px;
}

.msim i {
  width: 24px;
  height: 6px;
  background: #1414c8;
  border: 1px solid #ddd;
}

.msim b {
  font: bold 25px/22px "Liberation Sans", sans-serif;
  color: #111;
  -webkit-text-stroke: 1px #eee;
}

.tray {
  display: flex;
  align-items: center;
  margin-left: auto;
  height: 40px;
}

.ti {
  display: flex;
  align-items: center;
  justify-content: center;
  height: 40px;
  text-align: center;
  line-height: 20px;
}

.t1, .t2, .t3 { width: 32px; }
.t4, .t5 { width: 38px; }
.t6 { width: 66px; }
.t7 { width: 40px; }
.t8 { width: 12px; }

.t8::before {
  content: "";
  width: 1px;
  height: 40px;
  background: #555;
}

/* subtitle box sits over the window and the taskbar */
.caption {
  position: absolute;
  left: 407px;
  top: 1001px;
  width: 630px;
  height: 57px;
  background: rgba(8, 8, 8, 0.72);
  font-family: Roboto, sans-serif;
  font-size: 24px;
  color: #fff;
}

.caption p {
  margin: 0;
  height: 28.5px;
  line-height: 30px;
  overflow: hidden;
}

.caption span {
  display: inline-block;
  padding: 0 5px 0 6px;
  background: rgba(8, 8, 8, 0.75);
}

.pointer {
  position: absolute;
  left: 486px;
  top: 606px;
  display: flex;
  align-items: center;
  justify-content: center;
  width: 50px;
  height: 50px;
  border-radius: 50%;
  background: #fdf68e;
}
```
